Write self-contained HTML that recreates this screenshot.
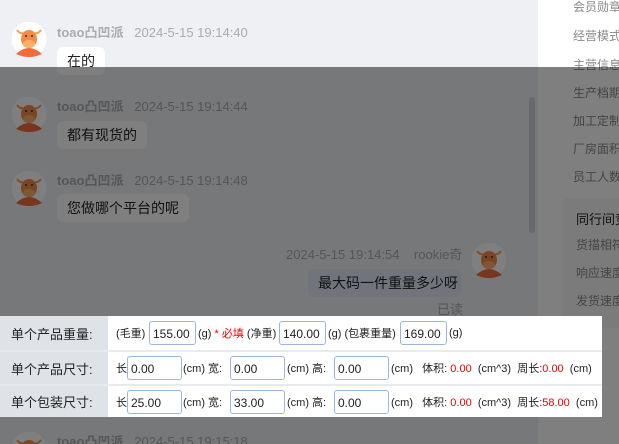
<!DOCTYPE html>
<html><head><meta charset="utf-8"><style>
*{margin:0;padding:0;box-sizing:border-box}
html,body{width:619px;height:444px;overflow:hidden}
body{background:#eef0f4;font-family:"Liberation Sans","Noto Sans CJK SC",sans-serif;}
#wrap{position:relative;width:619px;height:444px;overflow:hidden}
.a{position:absolute}
.nm{font-size:13px;color:#a8acb3;white-space:nowrap}
.bub{background:#fff;border-radius:6px;font-size:14px;color:#222;padding:0 10px;height:28px;line-height:28px;white-space:nowrap}
.rp{font-size:12px;color:#888;white-space:nowrap;left:573px}
#ov{position:absolute;left:0;top:67px;width:619px;height:377px;background:rgba(0,0,0,0.5)}
#tb{position:absolute;left:0;top:316px;width:602px;height:101px;background:#e8eaee;font-size:11px;color:#222}
.row{position:absolute;left:0;width:602px;background:#fff}
.lab{position:absolute;left:0;top:0;bottom:0;width:108px;background:#dfe3e8;font-size:13px;padding-left:11px;display:flex;align-items:center}
.t{position:absolute;white-space:nowrap;top:50%;transform:translateY(-50%)}
.in{position:absolute;height:24px;border:1px solid #9bb4e0;border-radius:3px;font-size:12px;padding-left:3px;line-height:24px;top:50%;transform:translateY(-50%);background:#fff}
.r{color:#e00}
</style></head><body><div id="wrap">
<svg width="0" height="0" style="position:absolute"><defs><g id="av"><circle cx="17" cy="17" r="17.5" fill="#fff"/><path d="M5 8 Q8 12 11 11 M29 8 Q26 12 23 11" stroke="#f5a05a" stroke-width="2" fill="none"/><path d="M4 32 Q17 20 30 32 Q17 38 4 32Z" fill="#f26b3a"/><ellipse cx="17" cy="17" rx="8" ry="9" fill="#f58a48"/><ellipse cx="17" cy="22" rx="6" ry="4" fill="#f7b26a"/><circle cx="14" cy="14" r="1" fill="#333"/><circle cx="20" cy="14" r="1" fill="#333"/></g></defs></svg>

<svg class="a" style="left:12px;top:22px" width="35" height="35"><use href="#av"/></svg>
<div class="a nm" style="left:57px;top:22px"><b>toao凸凹派</b>&nbsp;&nbsp;&nbsp;2024-5-15 19:14:40</div>
<div class="a bub" style="left:57px;top:47px">在的</div>

<svg class="a" style="left:12px;top:97px" width="35" height="35"><use href="#av"/></svg>
<div class="a nm" style="left:57px;top:96px"><b>toao凸凹派</b>&nbsp;&nbsp;&nbsp;2024-5-15 19:14:44</div>
<div class="a bub" style="left:57px;top:121px">都有现货的</div>

<svg class="a" style="left:12px;top:171px" width="35" height="35"><use href="#av"/></svg>
<div class="a nm" style="left:57px;top:170px"><b>toao凸凹派</b>&nbsp;&nbsp;&nbsp;2024-5-15 19:14:48</div>
<div class="a bub" style="left:57px;top:194px">您做哪个平台的呢</div>

<div class="a nm" style="left:286px;top:244px">2024-5-15 19:14:54&nbsp;&nbsp;&nbsp;&nbsp;rookie奇</div>
<svg class="a" style="left:472px;top:243px" width="35" height="35"><use href="#av"/></svg>
<div class="a bub" style="left:308px;top:269px;background:#e3ebf7;width:153px">最大码一件重量多少呀</div>
<div class="a nm" style="left:437px;top:299px">已读</div>

<svg class="a" style="left:12px;top:432px" width="35" height="12"><use href="#av"/></svg>
<div class="a nm" style="left:57px;top:431px;height:13px;overflow:hidden"><b>toao凸凹派</b>&nbsp;&nbsp;&nbsp;2024-5-15 19:15:18</div>

<div class="a" style="left:529px;top:97px;width:6px;height:136px;background:#d0d2d6;border-radius:3px"></div>
<div class="a" style="left:537px;top:0;width:82px;height:444px;background:#fff;border-left:1px solid #eee"></div>
<div class="a rp" style="top:-2px">会员勋章</div>
<div class="a rp" style="top:27px">经营模式</div>
<div class="a rp" style="top:56px">主营信息</div>
<div class="a rp" style="top:84px">生产档期</div>
<div class="a rp" style="top:112px">加工定制</div>
<div class="a rp" style="top:140px">厂房面积</div>
<div class="a rp" style="top:168px">员工人数</div>
<div class="a" style="left:563px;top:198px;width:56px;height:130px;background:#f6f7f9;border-radius:6px 0 0 6px"></div>
<div class="a rp" style="top:209px;left:576px;color:#222;font-size:13px">同行间竞</div>
<div class="a rp" style="top:236px;left:576px">货描相符</div>
<div class="a rp" style="top:264px;left:576px">响应速度</div>
<div class="a rp" style="top:292px;left:576px">发货速度</div>

<div id="ov"></div>

<div id="tb">
<div class="row" style="top:0;height:34px">
<div class="lab">单个产品重量:</div>
<div class="t" style="left:116px">(毛重)</div><div class="in" style="left:149px;width:47px">155.00</div>
<div class="t" style="left:198px">(g) <span class="r">* 必填</span> (净重)</div><div class="in" style="left:279px;width:47px">140.00</div>
<div class="t" style="left:328px">(g) (包裹重量)</div><div class="in" style="left:400px;width:47px">169.00</div>
<div class="t" style="left:449px">(g)</div>
</div>
<div class="row" style="top:36px;height:32px">
<div class="lab">单个产品尺寸:</div>
<div class="t" style="left:116px">长</div><div class="in" style="left:127px;width:55px">0.00</div>
<div class="t" style="left:183px">(cm) 宽:</div><div class="in" style="left:230px;width:55px">0.00</div>
<div class="t" style="left:287px">(cm) 高:</div><div class="in" style="left:334px;width:55px">0.00</div>
<div class="t" style="left:391px">(cm) &nbsp;&nbsp;体积: <span class="r">0.00</span> &nbsp;(cm^3) &nbsp;周长:<span class="r">0.00</span> &nbsp;(cm)</div>
</div>
<div class="row" style="top:70px;height:31px">
<div class="lab">单个包装尺寸:</div>
<div class="t" style="left:116px">长</div><div class="in" style="left:127px;width:55px">25.00</div>
<div class="t" style="left:183px">(cm) 宽:</div><div class="in" style="left:230px;width:55px">33.00</div>
<div class="t" style="left:287px">(cm) 高:</div><div class="in" style="left:334px;width:55px">0.00</div>
<div class="t" style="left:391px">(cm) &nbsp;&nbsp;体积: <span class="r">0.00</span> &nbsp;(cm^3) &nbsp;周长:<span class="r">58.00</span> &nbsp;(cm)</div>
</div>
</div>
</div></body></html>
